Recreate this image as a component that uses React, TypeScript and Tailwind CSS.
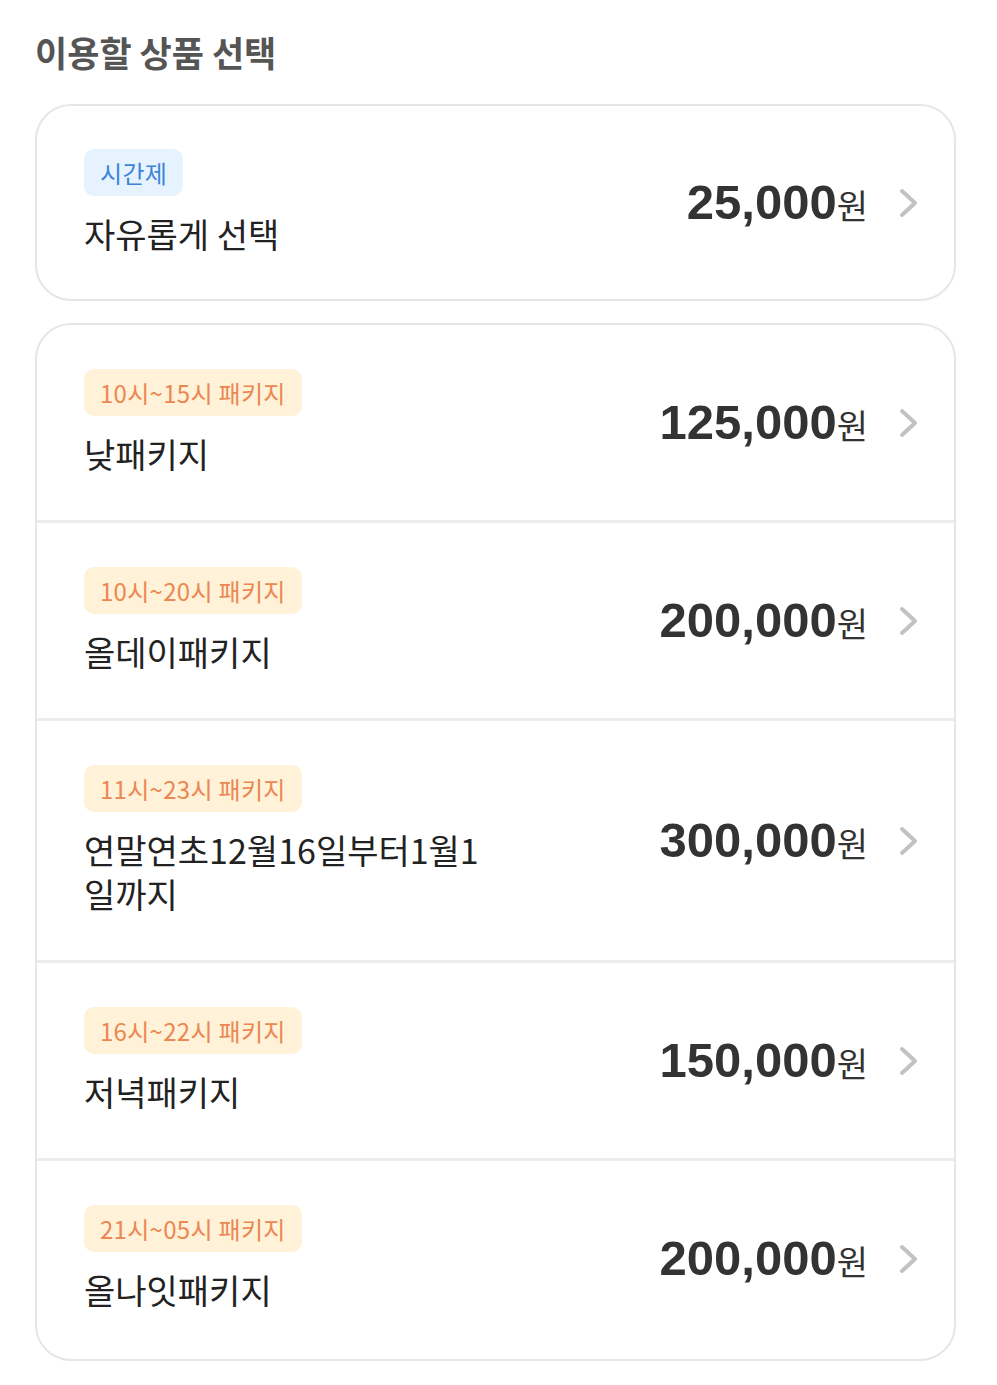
import React from 'react';

type Product = {
  badge: string;
  name: string;
  price: string;
  tone: 'blue' | 'orange';
};

const hourly: Product = { badge: '시간제', name: '자유롭게 선택', price: '25,000', tone: 'blue' };

const packages: Product[] = [
  { badge: '10시~15시 패키지', name: '낮패키지', price: '125,000', tone: 'orange' },
  { badge: '10시~20시 패키지', name: '올데이패키지', price: '200,000', tone: 'orange' },
  { badge: '11시~23시 패키지', name: '연말연초12월16일부터1월1일까지', price: '300,000', tone: 'orange' },
  { badge: '16시~22시 패키지', name: '저녁패키지', price: '150,000', tone: 'orange' },
  { badge: '21시~05시 패키지', name: '올나잇패키지', price: '200,000', tone: 'orange' },
];

function Chevron() {
  return (
    <svg width="20" height="30" viewBox="0 0 20 30" className="shrink-0">
      <polyline
        points="4,3 17,15 4,27"
        fill="none"
        stroke="#c2c2c2"
        strokeWidth="4"
        strokeLinecap="round"
        strokeLinejoin="round"
      />
    </svg>
  );
}

function ProductRow({ item, divider, tight }: { item: Product; divider?: boolean; tight?: boolean }) {
  const badgeClass =
    item.tone === 'blue'
      ? 'bg-[#e7f2ff] text-[#3b84d8]'
      : 'bg-[#fff2d8] text-[#ec8752]';
  return (
    <div
      className={`flex items-center justify-between pl-[47px] pr-[36px] ${tight ? 'py-[43px]' : 'py-[44px]'} ${
        divider ? 'border-t-[3px] border-[#ececec]' : ''
      }`}
    >
      <div className="flex flex-col items-start gap-[16px]">
        <span className={`inline-flex h-[47px] items-center rounded-[10px] px-[16px] text-[24px] tracking-[0.3px] ${badgeClass}`}>
          {item.badge}
        </span>
        <div className="w-[402px] break-all text-[34px] leading-[44px] text-[#222]">{item.name}</div>
      </div>
      <div className="flex items-center gap-[30px]">
        <div className="flex items-baseline text-[#333]">
          <span className="font-['Liberation_Sans',sans-serif] text-[49px] font-bold leading-none">
            {item.price}
          </span>
          <span className="text-[34px] leading-none">원</span>
        </div>
        <Chevron />
      </div>
    </div>
  );
}

export default function App() {
  return (
    <div className="min-h-[1385px] bg-white pl-[35px] pr-[41px] pt-[28px] font-['Noto_Sans_CJK_KR','Noto_Sans',sans-serif]">
      <h1 className="mb-[28px] text-[35px] font-bold leading-[48px] text-[#555]">이용할 상품 선택</h1>

      <div className="overflow-hidden rounded-[36px] border-2 border-[#e6e6e6]">
        <ProductRow item={hourly} tight />
      </div>

      <div className="mt-[22px] overflow-hidden rounded-[36px] border-2 border-[#e6e6e6] pb-[3px]">
        {packages.map((p, i) => (
          <ProductRow key={p.badge} item={p} divider={i > 0} />
        ))}
      </div>
    </div>
  );
}
